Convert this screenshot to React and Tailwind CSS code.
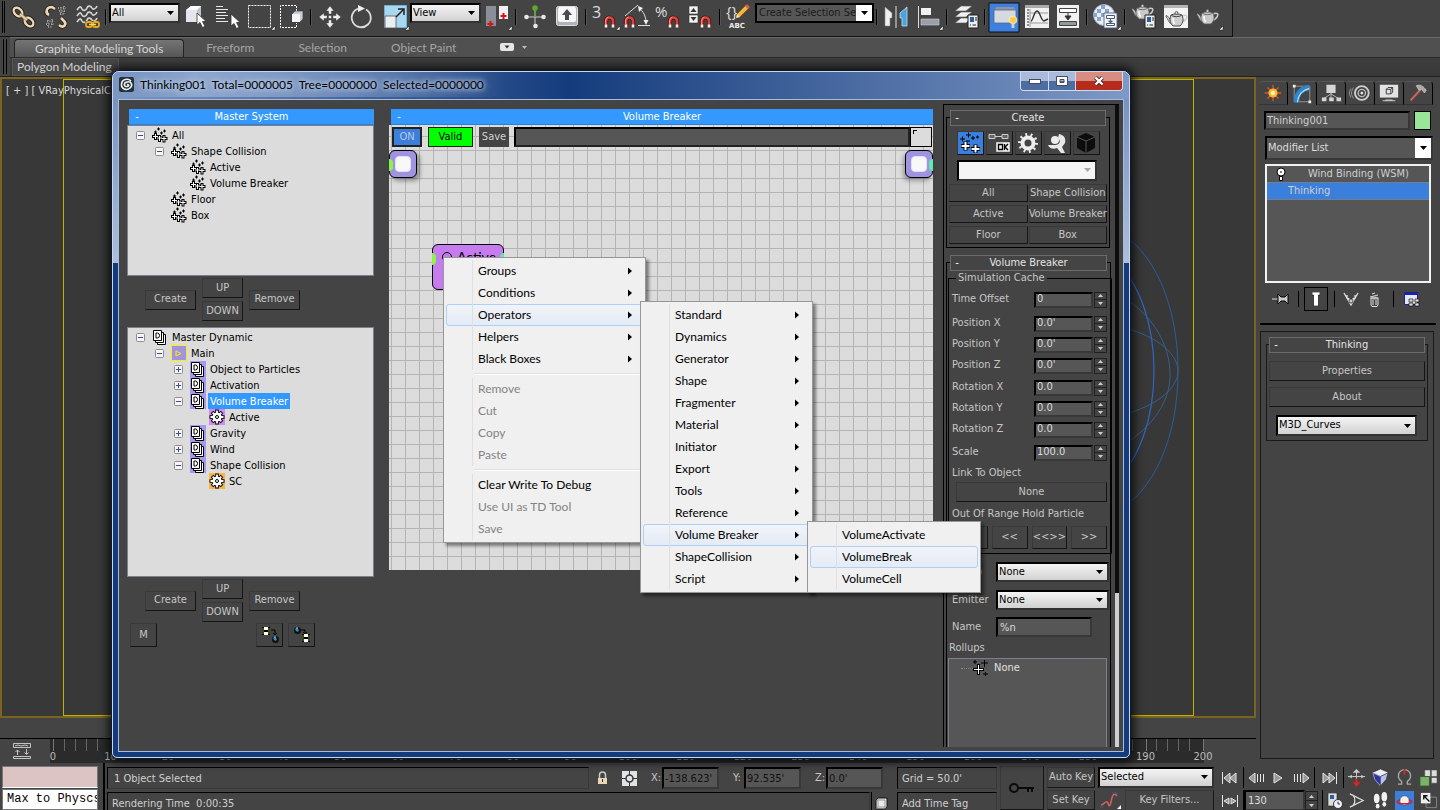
import { useState } from 'react'

const UI = "font-['DejaVu_Sans_Condensed','Open_Sans',sans-serif]"
const SHELL = 'font-[Lato,sans-serif]'

/* ---------- shared controls ---------- */

function Btn({ className = '', tint = 'bg-[#444]', children, ...rest }) {
  return (
    <button
      className={`flex items-center justify-center whitespace-nowrap border border-t-[#393939] border-l-[#393939] border-r-[#151515] border-b-[#151515] text-[#c6c6c6] ${tint} ${className}`}
      {...rest}
    >
      {children}
    </button>
  )
}

function Arrow({ className = '' }) {
  return (
    <svg className={className} width="7" height="4" viewBox="0 0 7 4">
      <path d="M0 0h7L3.5 4z" fill="currentColor" />
    </svg>
  )
}

function Dropdown({ label, options, className = '' }) {
  return (
    <div className={`relative border-2 border-t-black border-l-black border-r-[#333] border-b-[#333] bg-linear-to-b from-[#f4f4f4] to-[#d2d2d2] ${className}`}>
      <select aria-label={label} className="block h-full w-full appearance-none bg-transparent pl-px pr-4 text-black outline-none">
        {options.map((o) => <option key={o}>{o}</option>)}
      </select>
      <Arrow className="pointer-events-none absolute right-1 top-1/2 -mt-0.5 text-black" />
    </div>
  )
}

function Spinner() {
  return (
    <div className="flex w-[13px] flex-col border border-[#202020] text-[#d0d0d0]">
      <button aria-label="Increase" className="flex flex-1 items-center justify-center border-b border-[#202020]">
        <svg width="5" height="3" viewBox="0 0 5 3"><path d="M0 3h5L2.500 0z" fill="currentColor" /></svg>
      </button>
      <button aria-label="Decrease" className="flex flex-1 items-center justify-center">
        <svg width="5" height="3" viewBox="0 0 5 3"><path d="M0 0h5L2.500 3z" fill="currentColor" /></svg>
      </button>
    </div>
  )
}

const SUNK = 'border-2 border-t-black border-l-black border-r-[#383838] border-b-[#383838] bg-[#565656] outline-none'

function RollupHeader({ title, className = '' }) {
  return (
    <button className={`relative -mt-2 flex h-4 items-center border border-[#6b6b6b] bg-[#444] text-[#e4e4e4] ${className}`}>
      <span className="w-3 text-center text-white">-</span>
      <span className="flex-1 pr-3 text-center">{title}</span>
    </button>
  )
}

/* ---------- toolbar icons, 32x32 cells ---------- */

const Flyout = () => <path d="M31 25v4h-4z" fill="#fff" stroke="#111" strokeWidth=".5" />

const Cursor = ({ x, y }) => (
  <path transform={`translate(${x} ${y})`} d="M0 0v12l3-2.500 2.500 5 2.500-1.200-2.500-4.800h3.700z" fill="#fff" stroke="#333" strokeWidth=".8" />
)

const Magnet = ({ x, y }) => (
  <g transform={`translate(${x} ${y})`} fill="none">
    <path d="M2 12V6a3.500 3.500 0 0 1 7 0v6" stroke="#4a1212" strokeWidth="4.200" />
    <path d="M2 12V6a3.500 3.500 0 0 1 7 0v6" stroke="#d8443c" strokeWidth="2.600" />
    <path d="M1.500 9V6a4 4 0 0 1 3-4" stroke="#f4a09a" strokeWidth=".8" />
    <path d="M2 9.500v3M9 9.500v3" stroke="#f2f2f2" strokeWidth="2.600" />
  </g>
)

const Teapot = ({ x = 0, y = 0, fill = '#c9c9c9', stroke = '#555' }) => (
  <g transform={`translate(${x} ${y})`}>
    <path d="M16 5c4-2 6 0 4 3s-3 3-5 3" fill="none" stroke={fill} strokeWidth="1.500" />
    <path d="M5 9C3 8 3 5 0 4.500l0 1.500c2 1 2 6 6 7z" fill={fill} stroke={stroke} strokeWidth=".6" />
    <path d="M5 4c-2 5-1 8 2 11h7c3-3 4-6 2-11-3-1.500-8-1.500-11 0z" fill={fill} stroke={stroke} strokeWidth=".8" />
    <path d="M5.500 4.500c3 1.500 7 1.500 10 0" fill="none" stroke={stroke} strokeWidth=".8" />
    <circle cx="10.500" cy="2" r="1.500" fill={fill} stroke={stroke} strokeWidth=".6" />
    <path d="M7 7c0 3 0 4 1.500 6" stroke="#fff" strokeWidth="1.500" fill="none" />
  </g>
)

const MiniPanel = ({ x, y }) => (
  <g transform={`translate(${x} ${y})`}>
    <path d="M0 0h10v13H0z" fill="#eee" stroke="#222" />
    <path d="M2 2h4v5H2z" fill="#2c5f9e" />
    <path d="M8 2v4M2 10h1m1.500 0H8" stroke="#222" />
  </g>
)

const ICONS = {
  link: (
    <g fill="none">
      <g stroke="#2b2418" strokeWidth="4.500">
        <ellipse cx="11" cy="11" rx="5" ry="3.500" transform="rotate(45 11 11)" />
        <ellipse cx="22" cy="21" rx="5" ry="3.500" transform="rotate(45 22 21)" />
      </g>
      <g stroke="#ead9b8" strokeWidth="2.400">
        <ellipse cx="11" cy="11" rx="5" ry="3.500" transform="rotate(45 11 11)" />
        <ellipse cx="22" cy="21" rx="5" ry="3.500" transform="rotate(45 22 21)" />
        <path d="M13 13l7 6" stroke="#b89f70" strokeWidth="3" />
        <path d="M13 13l7 6" strokeWidth="1.400" />
      </g>
    </g>
  ),
  unlink: (
    <g fill="none">
      <path d="M10 14c-4-2-3-8 3-8l3 2M20 24c5 4 8-1 5-4l-3-3" stroke="#2b2418" strokeWidth="4.500" />
      <path d="M10 14c-4-2-3-8 3-8l3 2M20 24c5 4 8-1 5-4l-3-3" stroke="#ead9b8" strokeWidth="2.600" />
      <path d="M19 7h8M20 10h7M21 13h5M22 6v8M25 5v8M8 20h7M7 23h8M9 26h5M9 19v7M13 18v7" stroke="#b0b0b0" strokeDasharray="1 1.500" strokeWidth="1.400" />
    </g>
  ),
  bind: (
    <g fill="none">
      {[7, 13, 19].map((y) => (
        <path key={y} d={`M6 ${y + 2}c3-5 4-3 5-1s4 2 5-1 4-2 5 0 4 1 5-2`} stroke="#d5d5d5" strokeWidth="1.600" />
      ))}
      <path d="M14 20h14v8H14z" fill="#444" />
      <rect x="15" y="21" width="6" height="5" rx="2" stroke="#e8a914" strokeWidth="1.800" />
      <rect x="22" y="21" width="6" height="5" rx="2" stroke="#e8a914" strokeWidth="1.800" />
      <path d="M18 23.500h7" stroke="#ffd75e" strokeWidth="1.500" />
    </g>
  ),
  select: (
    <g>
      <path d="M6 9l5-4h10v12l-4 4H6z" fill="#bfc3cb" />
      <path d="M6 9h11v12H6z" fill="#e3e6ea" />
      <path d="M6 9l5-4h10l-4 4z" fill="#fff" />
      <Cursor x={17} y={12} />
    </g>
  ),
  byName: (
    <g>
      <path d="M4 5.500h7M4 8.500h12M4 11.500h10M4 14.500h12M4 17.500h9M4 20.500h12" stroke="#e8e8e8" />
      <Cursor x={19} y={13} />
    </g>
  ),
  region: (
    <g>
      <rect x="4.500" y="4.500" width="22" height="22" fill="none" stroke="#fff" strokeDasharray="2 1" />
      <Flyout />
    </g>
  ),
  crossing: (
    <g>
      <path d="M20.500 10V4.500h-16v22h16V22" fill="none" stroke="#fff" strokeDasharray="2 1" />
      <path d="M16 13l3-3h8v8l-3 3h-8z" fill="#c7cbd2" stroke="#333" strokeWidth=".6" />
      <path d="M16 13h8v8h-8z" fill="#f3f4f6" />
    </g>
  ),
  move: (
    <path d="M16 5l4 5h-2.500v3h-3v-3H12zM16 27l4-5h-2.500v-3h-3v3H12zM5 16l5-4v2.500h3v3h-3V20zM27 16l-5-4v2.500h-3v3h3V20zM14.500 14.500h3v3h-3z" fill="#eee" stroke="#333" strokeWidth=".4" />
  ),
  rotate: (
    <g fill="none">
      <path d="M13 7.500A9.500 9.500 0 1 0 20 8.500" stroke="#ddd" strokeWidth="1.800" />
      <path d="M12 4l7 3.500-7 3.500z" fill="#eee" />
    </g>
  ),
  scale: (
    <g>
      <path d="M6.500 4.500h22v22h-22z" fill="#a9d7ee" stroke="#69b5dc" />
      <path d="M7 15h11v12H7z" fill="#eceef2" stroke="#555" strokeWidth=".8" />
      <path d="M18 16l7-7M20 8h6v6" stroke="#222" strokeWidth="1.500" fill="none" />
      <Flyout />
    </g>
  ),
  pivot: (
    <g>
      <path d="M5 5h10v20H5z" fill="#8a8e98" />
      <path d="M18 5h9v13h-9z" fill="#f0f0f2" />
      <path d="M9.500 20v6M6.500 23h6M22.500 12v6M19.500 15h6" stroke="#e01010" strokeWidth="2" />
      <Flyout />
    </g>
  ),
  manipulate: (
    <g>
      <path d="M16 7v18M8 16h17" stroke="#ccc" />
      <path d="M16 8v8" stroke="#6c9b3a" strokeWidth="1.500" />
      <circle cx="16" cy="7" r="2.800" fill="#5fa829" />
      <circle cx="7.500" cy="16" r="2.300" fill="#e8e8e8" />
      <circle cx="24.500" cy="16" r="2.300" fill="#e8e8e8" />
      <circle cx="16.500" cy="25" r="2.300" fill="#e8e8e8" />
    </g>
  ),
  keyboard: (
    <g>
      <rect x="5.500" y="5.500" width="21" height="19" rx="2" fill="#aeb2ba" stroke="#ddd" />
      <rect x="7" y="6" width="18" height="15" rx="2" fill="#f7f7f8" />
      <path d="M16 8l5 6h-3v5h-4v-5h-3z" fill="#4a4a52" />
    </g>
  ),
  snap: (
    <g>
      <text x="3" y="17" fontSize="16" fill="#ddd" fontFamily="Open Sans">3</text>
      <Magnet x={15} y={14} />
      <Flyout />
    </g>
  ),
  angleSnap: (
    <g>
      <path d="M4 15L17 4M17 24.500h12M19 8c5 4 6 10 6 14" stroke="#ddd" fill="none" />
      <path d="M17 5l5 2-4 4zM22.500 19h5l-2.500 5z" fill="#eee" />
      <Magnet x={3} y={14} />
    </g>
  ),
  percentSnap: (
    <g>
      <text x="2" y="16" fontSize="15" fill="#ddd" fontFamily="Open Sans">%</text>
      <Magnet x={15} y={14} />
    </g>
  ),
  spinnerSnap: (
    <g>
      <path d="M4 5h9v8H4zM4 14h9v8H4z" fill="#f2f2f2" stroke="#333" strokeWidth=".6" />
      <path d="M5.500 11h6l-3-4zM5.500 16h6l-3 4z" fill="#333" />
      <Magnet x={15} y={14} />
    </g>
  ),
  sets: (
    <g>
      <text x="3" y="16" fontSize="15" fill="#ddd" fontFamily="Open Sans">{'{}'}</text>
      <text x="6" y="27" fontSize="7" fontWeight="700" fill="#eee" fontFamily="DejaVu Sans">ABC</text>
      <path d="M13 17l1-4 9-9 3 3-9 9z" fill="#f3b53a" stroke="#6b4a10" strokeWidth=".6" />
      <path d="M22 5l2-2 3 3-2 2z" fill="#d55" />
      <path d="M13 17l1-4 3 3z" fill="#f6e2c0" />
    </g>
  ),
  mirror: (
    <g>
      <path d="M5 6l7 6v5l-2 0 0 8H5z" fill="#eef0f3" stroke="#888" strokeWidth=".6" />
      <path d="M27 6l-7 6v5l2 0 0 8h5z" fill="#4da3dc" stroke="#bfe0f4" strokeWidth=".8" />
      <path d="M16 5v22" stroke="#ccc" strokeWidth="1.200" />
    </g>
  ),
  align: (
    <g>
      <path d="M6.500 5v22" stroke="#ddd" />
      <path d="M9 7h10v7H9z" fill="#eef0f3" />
      <path d="M9 18h18v6H9z" fill="#9aa0aa" stroke="#c9ccd2" strokeWidth=".6" />
      <Flyout />
    </g>
  ),
  layers: (
    <g>
      {[17, 11, 5].map((y) => (
        <path key={y} d={`M5 ${y + 5}l6-5h11l-6 5z`} fill="#f0f0f0" stroke="#555" strokeWidth=".6" />
      ))}
      <MiniPanel x={18} y={14} />
    </g>
  ),
  ribbon: (
    <g>
      <path d="M1 2h30v29H1z" fill="#3d80df" stroke="#111" />
      <path d="M6 10l2-4h18l2 4z" fill="#8c96a8" />
      <path d="M6 9h22v13H6z" fill="#d5d9e0" stroke="#5d6675" strokeWidth=".8" />
      <circle cx="25" cy="19" r="3.800" fill="#ffc94a" stroke="#fff2c0" strokeWidth=".8" />
      <path d="M23.500 23h3v4h-3z" fill="#cfcfcf" />
    </g>
  ),
  curves: (
    <g>
      <path d="M5 4h24v23H5z" fill="#f1f1f1" />
      <path d="M5 4h24v3H5z" fill="#aaa" />
      <path d="M10 8v18M10 12h18M10 22h18" stroke="#999" />
      <path d="M7 9h2M7 12h2M7 15h2M7 18h2M7 21h2M7 24h2" stroke="#333" />
      <path d="M11 20c2 0 3-10 6-10s4 10 7 10l4-2" fill="none" stroke="#333" strokeWidth="1.400" />
    </g>
  ),
  schematic: (
    <g>
      <path d="M5 4h22v23H5z" fill="#f1f1f1" />
      <path d="M7.500 7.500h17v4h-17z" fill="#fff" stroke="#444" />
      <path d="M7.500 20.500h17v4h-17z" fill="#8f9a9a" stroke="#444" />
      <path d="M16 12v5M13 15h6l-3 4z" stroke="#333" fill="#333" />
    </g>
  ),
  material: (
    <g>
      <circle cx="14" cy="14" r="10.500" fill="#e9eef5" stroke="#9fb0c6" />
      <path d="M7 8h4v4H7zM15 8h4v4h-4zM11 12h4v4h-4zM4 12h3v4H4zM7 16h4v4H7zM11 4h4v4h-4zM19 12h4v4h-4z" fill="#86a6cf" />
      <path d="M14 12h13v15H14z" fill="#f1f3f6" stroke="#46597c" strokeWidth=".8" />
      <path d="M16.500 14.500h8v3h-8zM16.500 22.500h8v2h-8z" fill="#fff" stroke="#46597c" />
      <path d="M20.500 18v2M18.500 20h4l-2 2z" stroke="#46597c" fill="#46597c" strokeWidth=".8" />
      <Flyout />
    </g>
  ),
  renderSetup: (
    <g>
      <Teapot x={4} y={3} />
      <MiniPanel x={17} y={14} />
    </g>
  ),
  frame: (
    <g>
      <path d="M4 4h24v23H4z" fill="#f4f4f4" />
      <path d="M4 4h24v3H4z" fill="#b5b5b5" />
      <Teapot x={6} y={10} fill="#cfcfcf" stroke="#222" />
    </g>
  ),
  render: (
    <g>
      <Teapot x={5} y={8} />
      <Flyout />
    </g>
  ),
}

function Tool({ name, label }) {
  return (
    <button aria-label={label} className="size-8 shrink-0">
      <svg width="32" height="32" viewBox="0 0 32 32">{ICONS[name]}</svg>
    </button>
  )
}

const Sep = () => <span className="mx-0.5 h-4 w-0.5 shrink-0 border-l border-black bg-[#555]" />

function MainToolbar() {
  return (
    <div className="flex h-[37px]">
      <div className={`flex items-center border-b border-r border-[#111] pb-0.5 pr-2 ${UI} text-[11px]`}>
        <span className="mx-0.5 h-8 w-[3px] shrink-0 border-x border-black" />
        <Tool name="link" label="Select and link" />
        <Tool name="unlink" label="Unlink selection" />
        <Tool name="bind" label="Bind to space warp" />
        <Sep />
        <Dropdown label="Selection filter" options={['All']} className="mb-2 h-[20px] w-[71px]" />
        <Tool name="select" label="Select object" />
        <Tool name="byName" label="Select by name" />
        <Tool name="region" label="Selection region" />
        <Tool name="crossing" label="Window crossing" />
        <Sep />
        <Tool name="move" label="Move" />
        <Tool name="rotate" label="Rotate" />
        <Tool name="scale" label="Scale" />
        <Dropdown label="Reference coordinate system" options={['View']} className="mb-2 h-[20px] w-[71px]" />
        <Tool name="pivot" label="Use pivot point center" />
        <Sep />
        <Tool name="manipulate" label="Manipulate" />
        <Tool name="keyboard" label="Keyboard shortcut override" />
        <Sep />
        <Tool name="snap" label="Snaps toggle" />
        <Tool name="angleSnap" label="Angle snap" />
        <Tool name="percentSnap" label="Percent snap" />
        <Tool name="spinnerSnap" label="Spinner snap" />
        <Sep />
        <Tool name="sets" label="Edit named selection sets" />
        <div className="mb-2 flex h-5 w-[119px] border-2 border-black bg-[#565656]">
          <input aria-label="Named selection sets" defaultValue="Create Selection Se" className="min-w-0 flex-1 bg-transparent pl-0.5 text-[#1c1c1c] outline-none" />
          <button aria-label="Show sets" className="flex w-4 items-center justify-center bg-white"><Arrow className="text-black" /></button>
        </div>
        <Sep />
        <Tool name="mirror" label="Mirror" />
        <Tool name="align" label="Align" />
        <Sep />
        <Tool name="layers" label="Layer manager" />
        <Sep />
        <Tool name="ribbon" label="Graphite modeling tools" />
        <Tool name="curves" label="Curve editor" />
        <Tool name="schematic" label="Schematic view" />
        <Sep />
        <Tool name="material" label="Material editor" />
        <Sep />
        <Tool name="renderSetup" label="Render setup" />
        <Tool name="frame" label="Rendered frame window" />
        <Tool name="render" label="Render production" />
      </div>
    </div>
  )
}

function Ribbon() {
  return (
    <div className={`flex h-10 border-b border-[#222] text-xs ${SHELL}`}>
      <span className="mx-[3px] my-0.5 w-[4px] border-x border-black" />
      <div className="flex min-w-0 flex-1 flex-col">
        <div className="flex h-[21px] items-end border-b border-[#2b2b2b] border-t border-t-[#6a6a6a] bg-[#505050] pl-1 text-[#a5a5a5]">
          <button className="h-[18px] rounded-t-sm border border-b-0 border-[#222] bg-linear-to-b from-[#757575] to-[#565656] px-5 leading-4 text-[#d6d6d6]">
            Graphite Modeling Tools
          </button>
          <button className="h-[18px] px-[22px] leading-4">Freeform</button>
          <button className="h-[18px] px-[22px] leading-4">Selection</button>
          <button className="h-[18px] px-[22px] leading-4">Object Paint</button>
          <button aria-label="Ribbon options" className="mb-1.5 ml-[22px] flex items-center gap-2 text-[#bbb]">
            <svg width="14" height="8" viewBox="0 0 14 8"><rect width="14" height="8" rx="2" fill="#e6e6e6" /><path d="M4.500 2.500h5L7 5.500z" fill="#333" /></svg>
            <svg width="5" height="3" viewBox="0 0 5 3"><path d="M0 0h5L2.500 3z" fill="currentColor" /></svg>
          </button>
        </div>
        <div className="flex-1 bg-linear-to-b from-[#3e3e3e] to-[#383838]">
          <button className="ml-0.5 h-[18px] w-[107px] whitespace-nowrap border border-[#555] bg-[#474747] pl-1 text-left leading-4 text-[#d2d2d2]">Polygon Modeling</button>
        </div>
      </div>
    </div>
  )
}

/* ---------- viewport and time slider ---------- */

function Viewport() {
  return (
    <main className={`relative min-h-0 flex-1 border-2 border-[#7b6420] bg-[#383838] text-[11px] text-[#d8d8d8] ${UI}`}>
      <div className="h-full pl-[61px] pr-[60px]">
        <div className="h-full border border-[#b9b400]" />
      </div>
      <p className="absolute left-1 top-1 whitespace-nowrap">[ + ] [ VRayPhysicalCam001 ]</p>
      <svg className="absolute right-[60px] top-[130px]" width="140" height="320" viewBox="0 0 140 320" fill="none" stroke="#2c5c9c">
        <path d="M60 20c40 20 64 76 64 142s-24 122-64 142" />
        <path d="M60 50c26 24 40 66 40 112s-14 88-40 112" stroke="#2f66c8" strokeWidth="1.200" />
        <path d="M66 86c24 14 48 40 50 76s-26 62-50 76M66 118c30 6 58 24 58 44s-28 38-58 44" stroke="#33608f" />
      </svg>
    </main>
  )
}

function TimeSlider() {
  const marks = Array.from({ length: 21 }, (_, i) => i * 10)
  return (
    <div className={`flex h-[25px] border-t border-black text-[11px] text-[#bcbcbc] ${UI}`}>
      <button aria-label="Mini curve editor" className="flex w-[50px] shrink-0 items-center justify-center pr-[7px] pl-px">
        <svg width="18" height="17" viewBox="0 0 18 17" fill="none" stroke="#c4c4c4">
          <path d="M.5.500h17v4H.5zM.5 13.500h17v2H.5zM2 3l3-1 3 1 4-1 3 1M4.500 12V7M2.500 9l2-2 2 2M13.500 6v5M11.500 9.500l2 2 2-2" />
        </svg>
      </button>
      <div className="mr-[52px] flex flex-1 bg-[#2b2b2b]">
        {marks.map((m) => (
          <div key={m} className={m === 200 ? 'w-1' : 'flex-1 basis-0'}>
            <div className="ml-[3px] flex h-3 border-l border-[#777]">
              {m < 200 && [0, 1, 2, 3, 4].map((t) => <span key={t} className={t === 4 ? 'flex-1' : 'flex-1 border-r border-[#666]'} />)}
            </div>
            <span className="-ml-3 block w-[30px] text-center leading-3">{m}</span>
          </div>
        ))}
      </div>
    </div>
  )
}

/* ---------- command panel ---------- */

const TABS = [
  ['Create', <g key="c"><path d="M12 3v18M3 12h18M6 6l12 12M18 6L6 18" stroke="#d9562a" strokeWidth="1.400" /><circle cx="12" cy="12" r="5" fill="#ffb52e" /><circle cx="12" cy="12" r="2.500" fill="#fff3b0" /></g>],
  ['Modify', <g key="m"><path d="M3.500 3.500h17v17h-17z" fill="none" stroke="#999" /><path d="M6 21C6 12 11 6 20 5" fill="none" stroke="#2d85cc" strokeWidth="6" /><path d="M7 21C8 12 12 8 20 6" fill="none" stroke="#a8dcfa" strokeWidth="1.500" /><path d="M2 2h3v3H2zM19 19h3v3h-3z" fill="#eee" /></g>],
  ['Hierarchy', <g key="h"><path d="M7 3h10v9H7z" fill="#d3d5d8" /><path d="M12 12v6M12 13l-8 5M12 13l8 5" stroke="#bbb" /><path d="M2 17h5v4H2zM10 17h5v4h-5zM18 17h5v4h-5z" fill="#d3d5d8" /></g>],
  ['Motion', <g key="o" fill="none"><path d="M5 6c-3 4-3 8 0 12M2 7c-2 4-2 6 0 10" stroke="#999" /><circle cx="14" cy="12" r="7.500" stroke="#d0d0d0" strokeWidth="2" /><circle cx="14" cy="12" r="4" stroke="#bbb" strokeWidth="1.500" /><circle cx="14" cy="12" r="1.500" fill="#eee" /></g>],
  ['Display', <g key="d"><path d="M2 3h20v14H2z" fill="#e2e2e4" /><path d="M9 8l2-2h5v5l-2 2H9zM9 8h5v5M14 8l2-2" fill="none" stroke="#333" /><path d="M8 19h8v1H8zM5 20h14v1H5z" fill="#c5c5c5" /></g>],
  ['Utilities', <g key="u"><path d="M4 20L15 8" stroke="#a05048" strokeWidth="3" /><path d="M4 20L15 8" stroke="#d98a80" /><path d="M10 4c5-2 8 1 11 5l-2 3-3-4-3 1z" fill="#a9a9a9" stroke="#ddd" strokeWidth=".6" /></g>],
]

function CommandPanel() {
  return (
    <aside className={`flex w-[184px] shrink-0 flex-col pb-1 text-[11px] text-[#cfcfcf] ${UI}`}>
      <div className="mt-1 flex pl-[3px]">
        {TABS.map(([name, icon], i) => (
          <button key={name} aria-label={name} className={`flex h-6 w-[29px] items-center justify-center rounded-t border-r border-t border-t-[#555] border-r-black ${i === 1 ? '' : 'border-b border-b-[#333]'}`}>
            <svg width="22" height="22" viewBox="0 0 24 24">{icon}</svg>
          </button>
        ))}
      </div>
      <div className="mt-1.5 flex gap-1 pl-2 pr-[9px]">
        <input aria-label="Object name" defaultValue="Thinking001" className={`h-[19px] min-w-0 flex-1 pl-px ${SUNK}`} />
        <button aria-label="Object color" className="w-[17px] border border-black bg-[#99e699]" />
      </div>
      <div className="relative ml-[9px] mr-[7px] mt-1.5 h-6">
        <select aria-label="Modifier list" className={`h-full w-full appearance-none pl-px text-[#dcdcdc] ${SUNK}`}><option>Modifier List</option></select>
        <span className="pointer-events-none absolute inset-y-0.5 right-0.5 flex w-4 items-center justify-center bg-white text-black"><Arrow /></span>
      </div>
      <ul className="ml-[9px] mr-[9px] mt-1 h-[119px] border-2 border-[#f2f2f2] bg-[#565656] leading-4">
        <li className="flex">
          <svg className="ml-2" width="12" height="16" viewBox="0 0 12 16"><circle cx="6" cy="6" r="4" fill="#fff" stroke="#000" /><path d="M4.500 10.500h3v4h-3z" fill="#fff" stroke="#000" /><path d="M6 5v2" stroke="#000" /></svg>
          <span className="ml-[21px]">Wind Binding (WSM)</span>
        </li>
        <li className="border-y border-[#6f7f95] bg-[#3b7fdd] pl-[21px] leading-4">Thinking</li>
      </ul>
      <div className="mt-1 flex h-6 items-center pl-4">
        <button aria-label="Pin stack">
          <svg width="18" height="12" viewBox="0 0 18 12"><path d="M0 6h6" stroke="#ddd" /><path d="M6 1v10l3-3h4l3 3V1l-3 3H9z" fill="#ccc" stroke="#000" /></svg>
        </button>
        <span className="ml-2 h-4 w-px bg-black" />
        <button aria-label="Show end result" className="ml-[5px] flex h-6 w-6 items-center justify-center border border-black">
          <svg width="8" height="14" viewBox="0 0 8 14"><path d="M0 0h8v3H6.500v11h-5V3H0z" fill="#fff" stroke="#000" strokeWidth=".6" /></svg>
        </button>
        <span className="ml-1.5 h-4 w-px bg-black" />
        <button aria-label="Make unique" className="ml-2">
          <svg width="16" height="15" viewBox="0 0 16 15"><path d="M1 1l7 12 7-12M5 6l3 3 3-3M4 3v4M12 3v4" fill="none" stroke="#e2e2e2" strokeWidth="1.300" /><circle cx="8" cy="9" r="2" fill="#ccc" stroke="#111" strokeWidth=".6" /></svg>
        </button>
        <button aria-label="Remove modifier" className="ml-[9px]">
          <svg width="13" height="15" viewBox="0 0 13 15"><path d="M3 6h7v7l-1 1.500H4L3 13zM5 8v5M8 8v5M2 5l8-2M4 2l3-1" fill="none" stroke="#ddd" /><ellipse cx="6.500" cy="6" rx="4" ry="1.500" fill="#bbb" /></svg>
        </button>
        <span className="ml-3 h-4 w-px bg-black" />
        <button aria-label="Configure modifier sets" className="ml-2.5">
          <svg width="16" height="15" viewBox="0 0 16 15"><path d="M.5.500h13v12H.5z" fill="#e6e9f5" stroke="#1a22a8" /><path d="M0 0h14v3H0z" fill="#1a22a8" /><path d="M5 7h4v3H5zM11 7h4v3h-4zM5 11h4v3H5zM11 11h4v3h-4z" fill="#ddd" stroke="#111" strokeWidth=".7" /></svg>
        </button>
      </div>
      <div className="mx-1 mt-3 h-0.5 bg-black" />
      <section className="ml-1 mr-1.5 mt-1.5 flex-1 border border-[#191919] px-[5px] pt-3">
        <div className="flex flex-col border border-[#191919] px-0.5 pb-1">
          <RollupHeader title="Thinking" />
          <Btn className="mt-2 h-5">Properties</Btn>
          <Btn className="mt-1.5 h-5">About</Btn>
          <Dropdown label="Thinking tool" options={['M3D_Curves']} className="ml-[7px] mr-2 mt-2 h-[21px]" />
        </div>
      </section>
    </aside>
  )
}

/* ---------- Thinking Particles window ---------- */

function ParticleIcon() {
  return (
    <svg width="16" height="16" viewBox="0 0 16 16" fill="none">
      <path d="M2 5h3M3.500 3.500v3M5 2h3M6.500.500v3M11 4h3M12.500 2.500v3M8 6h3M9.500 4.500v3" stroke="#000" />
      <path d="M0 9.500h7M3.500 6v7M4 11h7M7.500 8v7M8.500 11.500h7M12 8v7.500" stroke="#000" strokeWidth="3" />
      <path d="M1 9.500h5M3.500 7v5M5 11h5M7.500 9v5M9.500 11.500h5M12 9v5.500" stroke="#fff" strokeWidth="1" />
    </svg>
  )
}

function GroupIcon({ tint = '' }) {
  return (
    <span className={`flex size-4 items-center justify-center ${tint}`}>
      <svg width="14" height="15" viewBox="0 0 14 15">
        <path d="M4.500 4.500h8v10h-8z" fill="#fff" stroke="#000" />
        <path d="M2.500 2.500h8v10h-8z" fill="#fff" stroke="#000" />
        <path d="M.5.500h8v10h-8z" fill="#fff" stroke="#000" />
        <path d="M3 3h1.500q2 0 2 2.500T4.500 8H3z" fill="none" stroke="#000" />
      </svg>
    </span>
  )
}

function GearIcon({ tint }) {
  return (
    <span className={`flex size-4 items-center justify-center ${tint}`}>
      <svg width="16" height="16" viewBox="0 0 16 16" fill="none">
        <path d="M8 .5v15M.5 8h15M3 3l10 10M13 3L3 13" stroke="#000" strokeWidth="3.600" />
        <circle cx="8" cy="8" r="5.500" fill="#000" />
        <path d="M8 1.500v13M1.500 8h13M3.600 3.600l8.800 8.800M12.400 3.600l-8.800 8.800" stroke="#fff" strokeWidth="1.800" />
        <circle cx="8" cy="8" r="4.600" fill="#fff" />
        <circle cx="8" cy="8" r="1.500" stroke="#000" />
      </svg>
    </span>
  )
}

const NODE_ICONS = {
  particle: <ParticleIcon />,
  group: <GroupIcon />,
  violetGroup: <GroupIcon tint="bg-[#a69af0]" />,
  violetGear: <GearIcon tint="bg-[#cf8bf2]" />,
  orangeGear: <GearIcon tint="bg-[#f5b443]" />,
  main: (
    <span className="flex size-4 items-center justify-center border border-[#ffee00] bg-[#a093e0]">
      <svg width="8" height="7" viewBox="0 0 8 7"><path d="M1 1v5l5-2.500z" fill="none" stroke="#ffee00" /></svg>
    </span>
  ),
}

const SYSTEM_TREE = [
  [0, '-', 'particle', 'All'],
  [1, '-', 'particle', 'Shape Collision'],
  [2, '', 'particle', 'Active'],
  [2, '', 'particle', 'Volume Breaker'],
  [1, '', 'particle', 'Floor'],
  [1, '', 'particle', 'Box'],
]

const DYNAMIC_TREE = [
  [0, '-', 'group', 'Master Dynamic'],
  [1, '-', 'main', 'Main'],
  [2, '+', 'violetGroup', 'Object to Particles'],
  [2, '+', 'violetGroup', 'Activation'],
  [2, '-', 'violetGroup', 'Volume Breaker', true],
  [3, '', 'violetGear', 'Active'],
  [2, '+', 'violetGroup', 'Gravity'],
  [2, '+', 'violetGroup', 'Wind'],
  [2, '-', 'violetGroup', 'Shape Collision'],
  [3, '', 'orangeGear', 'SC'],
]

const INDENT = ['pl-2', 'pl-[27px]', 'pl-[46px]', 'pl-[65px]']

function Tree({ rows, className = '' }) {
  return (
    <ul className={`border border-[#7c808c] bg-[#dcdcdc] text-black ${className}`}>
      {rows.map(([depth, toggle, icon, name, selected], i) => (
        <li key={i} className={`flex h-4 items-center ${INDENT[depth]}`}>
          <span className="flex w-[9px] shrink-0">
            {toggle && (
              <svg width="9" height="9" viewBox="0 0 9 9">
                <rect x=".5" y=".5" width="8" height="8" rx="1" fill="#f6f6f6" stroke="#8d8d8d" />
                <path d={toggle === '+' ? 'M2 4.500h5M4.500 2v5' : 'M2 4.500h5'} stroke="#3a4f9a" />
              </svg>
            )}
          </span>
          <span className="ml-[7px] mr-0.5 shrink-0">{NODE_ICONS[icon]}</span>
          <span className={`h-4 whitespace-nowrap px-0.5 leading-[17px] ${selected ? 'bg-[#3399ff] text-white' : ''}`}>{name}</span>
        </li>
      ))}
    </ul>
  )
}

function TreeButtons() {
  return (
    <div className="flex items-center gap-1.5 pl-[18px]">
      <Btn className="h-5 w-[51px]">Create</Btn>
      <div className="flex flex-col gap-[3px]">
        <Btn className="h-5 w-[41px]">UP</Btn>
        <Btn className="h-5 w-[41px]">DOWN</Btn>
      </div>
      <Btn className="h-5 w-[51px]">Remove</Btn>
    </div>
  )
}

function BlueHeader({ title }) {
  return (
    <div className="ml-0.5 flex h-4 items-center border-b border-[#2a7fd6] bg-[#3399ff] leading-[17px] text-white">
      <button aria-label={`Collapse ${title}`} className="w-4 text-center">-</button>
      <span className="flex-1 pr-4 text-center">{title}</span>
    </div>
  )
}

const Floppy = () => (
  <g><path d="M0 0h8v8H0z" fill="#000" /><path d="M2 0h4v3H2zM2 5h4v3H2z" fill="#fff" /><path d="M1 1v6M7 1v6" stroke="#8a8a20" /></g>
)

const Globe = () => (
  <g><circle cx="3.500" cy="3.500" r="3.500" fill="#111" /><path d="M1 2l2-1 2 2-1 2-2-1z" fill="#2e8fc0" /><path d="M2 1h2" stroke="#9ee" /></g>
)

function SystemColumn() {
  return (
    <div className="flex w-[247px] shrink-0 flex-col">
      <BlueHeader title="Master System" />
      <Tree rows={SYSTEM_TREE} className="mb-0.5 h-[151px] pt-px" />
      <TreeButtons />
      <Tree rows={DYNAMIC_TREE} className="mt-1.5 h-[250px] pt-px" />
      <div className="pt-0.5"><TreeButtons /></div>
      <div className="mt-px flex pl-[3px]">
        <Btn className="h-6 w-[27px]">M</Btn>
        <Btn aria-label="Export" className="ml-[99px] h-6 w-[27px]">
          <svg width="18" height="18" viewBox="0 0 18 18"><g transform="translate(1 1)"><Floppy /></g><g transform="translate(11 10)"><Globe /></g><path d="M10 4h4v5M12 7l2 2 2-2" fill="none" stroke="#000" /></svg>
        </Btn>
        <Btn aria-label="Import" className="ml-[5px] h-6 w-[27px]">
          <svg width="18" height="18" viewBox="0 0 18 18"><g transform="translate(1 1)"><Globe /></g><g transform="translate(9 8)"><Floppy /></g><path d="M8 4h4v4M10 6l2 2 2-2" fill="none" stroke="#000" /></svg>
        </Btn>
      </div>
    </div>
  )
}

/* context menu */

const BREAKER_MENU = [{ name: 'VolumeActivate' }, { name: 'VolumeBreak', hot: true }, { name: 'VolumeCell' }]

const OPERATOR_MENU = [
  'Standard', 'Dynamics', 'Generator', 'Shape', 'Fragmenter', 'Material', 'Initiator',
  'Export', 'Tools', 'Reference', 'Volume Breaker', 'ShapeCollision', 'Script',
].map((name) => (name === 'Volume Breaker' ? { name, more: true, hot: true, items: BREAKER_MENU, width: 'w-[174px]' } : { name, more: true }))

const NODE_MENU = [
  { name: 'Groups', more: true },
  { name: 'Conditions', more: true },
  { name: 'Operators', more: true, hot: true, items: OPERATOR_MENU, width: 'w-[173px]' },
  { name: 'Helpers', more: true },
  { name: 'Black Boxes', more: true },
  null,
  { name: 'Remove', off: true },
  { name: 'Cut', off: true },
  { name: 'Copy', off: true },
  { name: 'Paste', off: true },
  null,
  { name: 'Clear Write To Debug' },
  { name: 'Use UI as TD Tool', off: true },
  { name: 'Save', off: true },
]

function Menu({ items, className = '' }) {
  return (
    <ul role="menu" className={`absolute z-20 border border-[#979797] bg-[#f0f0f0] p-0.5 text-xs text-black shadow-[3px_3px_3px_rgba(0,0,0,0.45)] ${SHELL} ${className}`}>
      {items.map((item, i) =>
        item ? (
          <li key={item.name} className="relative">
            <button
              role="menuitem"
              disabled={item.off}
              className={`flex h-[22px] w-full items-center whitespace-nowrap rounded-[3px] border ${item.hot ? 'border-[#aecff7] bg-linear-to-b from-[#f1f4f9] to-[#e4ebf5]' : 'border-transparent'} ${item.off ? 'text-[#838383]' : ''}`}
            >
              <span className="mr-[5px] h-[22px] w-[26px] shrink-0 border-r border-[#e0e0e0]" />
              <span className="flex-1 text-left">{item.name}</span>
              {item.more && <svg className="mr-2.5" width="4" height="8" viewBox="0 0 4 8"><path d="M0 .5v7L4 4z" fill="#000" /></svg>}
            </button>
            {item.items && <Menu items={item.items} className={`left-full -top-[3px] -ml-[3px] ${item.width}`} />}
          </li>
        ) : (
          <li key={i} role="separator" className="flex h-2 items-center"><span className="ml-7 h-0.5 flex-1 border-b border-white bg-[#e0e0e0]" /></li>
        ),
      )}
    </ul>
  )
}

function Canvas() {
  const [on, setOn] = useState(true)
  return (
    <div className="flex min-w-0 flex-1 flex-col">
      <BlueHeader title="Volume Breaker" />
      <div className="relative h-[445px] bg-[#dcdcdc] bg-[linear-gradient(to_right,#b4b4b4_1px,transparent_1px),linear-gradient(to_bottom,#b4b4b4_1px,transparent_1px)] bg-size-[14px_14px] bg-position-[2px_11px]">
        <div className="flex h-[22px] items-center pl-[3px] pr-px pt-0.5">
          <button onClick={() => setOn(!on)} className="h-5 w-[30px] border-2 border-[#222] bg-[#3b7fdd] leading-4 text-[#b9c9e2]">{on ? 'ON' : 'OFF'}</button>
          <button className="ml-1.5 h-5 w-[45px] border border-[#222] bg-[#00ff00] text-black">Valid</button>
          <button className="ml-1.5 h-5 w-[30px] bg-[#444] text-[#d2d2d2]">Save</button>
          <input aria-label="Group note" className="ml-[5px] h-5 min-w-0 flex-1 border-2 border-t-black border-l-black border-r-[#222] border-b-[#222] bg-[#565656] outline-none" />
          <button aria-label="Maximize" className="relative h-5 w-[22px] shrink-0 border border-black bg-[#dcdcdc]"><span className="absolute left-0.5 top-0.5 h-1 w-1 border-l border-t border-black" /></button>
        </div>
        <div className="absolute left-0 top-[25px] flex size-7 items-center justify-center rounded-md border border-black bg-[#a093e0] shadow-[3px_3px_4px_rgba(0,0,0,0.35)]">
          <span className="absolute -left-px top-2 h-3 w-1 rounded-r-full bg-[#8df24c]" />
          <span className="size-4 rounded border border-[#e4defa] bg-[#f8f8f8]" />
        </div>
        <div className="absolute right-0 top-[25px] flex size-7 items-center justify-center rounded-md border border-black bg-[#a093e0] shadow-[-2px_3px_4px_rgba(0,0,0,0.3)]">
          <span className="absolute -right-px top-2 h-3 w-1 rounded-l-full bg-[#5fe8b0]" />
          <span className="size-4 rounded border border-[#e4defa] bg-[#f8f8f8]" />
        </div>
        <div className={`absolute left-[43px] top-[119px] h-[46px] w-[72px] rounded-md border border-black bg-[#c67bef] text-sm text-black ${SHELL}`}>
          <span className="absolute -left-px top-2 h-3 w-1 rounded-r-full bg-[#8df24c]" />
          <span className="absolute -right-px top-2 h-3 w-1 rounded-l-full bg-[#5fe8b0]" />
          <p className="flex items-center gap-[5px] pl-[9px] pt-0.5 leading-5"><span className="size-[10px] rounded-full border border-black" />Active</p>
        </div>
        <Menu items={NODE_MENU} className="left-[54px] top-[132px] w-[203px]" />
      </div>
    </div>
  )
}

/* right rollups */

const CREATE_ICONS = [
  ['Particle groups', 'bg-[#3b7fdd]', <g key="a" fill="none"><path d="M1 7h5M3.500 4.500v5M7 3h5M9.500.500v5M12 6h4M14 4v4M17 5h3M18.500 3.500v3M7 9h4" stroke="#000" /><path d="M2 14h9M6.500 9.500v9M12 17h9M16.500 12.500V21" stroke="#000" strokeWidth="4" /><path d="M2.500 14h8M6.500 10v8M12.500 17h8M16.500 13v7.500" stroke="#fff" strokeWidth="2" /></g>],
  ['Conditions', 'bg-[#444]', <g key="b"><path d="M1 2.500h6v4H1zM14 2.500h6v4h-6zM7 4.500h7" fill="#666" stroke="#ccc" /><path d="M8.500 10.500h13v9h-13z" fill="#eee" stroke="#ccc" /><path d="M10.500 12.500h4v5h-4zM16.500 12v6M20 12l-3 3 3 3" fill="none" stroke="#000" strokeWidth="1.300" /></g>],
  ['Operators', 'bg-[#444]', <g key="c" fill="none" stroke="#eee"><circle cx="11" cy="11" r="5.500" strokeWidth="4" /><circle cx="11" cy="11" r="8.500" strokeWidth="3" strokeDasharray="1.800 3.500" /></g>],
  ['Helpers', 'bg-[#444]', <g key="d"><path d="M13 2c5 1 7 4 6 9l-3 4 3 6h-4l-4-5c-4 2-8 0-9-3l7 0c5 0 6-4 3-7z" fill="#e8e8e8" /><circle cx="9" cy="8" r="4" fill="#eee" /></g>],
  ['Black boxes', 'bg-[#444]', <g key="e"><path d="M11 1l9 4v11l-9 5-9-5V5z" fill="#0d0d0d" /><path d="M2 5l9 4 9-4M11 9v12" fill="none" stroke="#555" /></g>],
]

function SpinRow({ label, value, className = '' }) {
  return (
    <label className={`flex h-[21px] items-center ${className}`}>
      <span className="w-[82px]">{label}</span>
      <input defaultValue={value} className={`h-4 w-[59px] pl-px text-[#dcdcdc] ${SUNK}`} />
      <span className="ml-px flex h-4"><Spinner /></span>
    </label>
  )
}

function Rollups() {
  return (
    <div className="flex w-44 shrink-0 border-l border-t border-black text-[#c6c6c6]">
      <div className="flex min-w-0 flex-1 flex-col overflow-hidden pl-0.5 pr-1 pt-3">
        <section className="mr-px flex flex-col border border-black px-0.5 pb-[3px]">
          <RollupHeader title="Create" className="mx-px" />
          <div className="mt-[5px] flex justify-center gap-0.5">
            {CREATE_ICONS.map(([name, tint, icon]) => (
              <Btn key={name} aria-label={name} tint={tint} className="h-6 w-[27px]">
                <svg width="22" height="22" viewBox="0 0 22 22">{icon}</svg>
              </Btn>
            ))}
          </div>
          <div className="relative ml-2 mr-2.5 mt-[5px] h-[21px] border-2 border-black border-r-[#333] border-b-[#333] bg-[#f4f4f4]">
            <select aria-label="Particle group" className="h-full w-full appearance-none outline-none"><option></option></select>
            <Arrow className="pointer-events-none absolute right-1 top-1.5 text-[#a8a8a8]" />
          </div>
          <div className="mt-[3px] grid grid-cols-2 gap-x-px gap-y-[3px]">
            {['All', 'Shape Collision', 'Active', 'Volume Breaker', 'Floor', 'Box'].map((b) => <Btn key={b} className="h-[18px]">{b}</Btn>)}
          </div>
        </section>

        <section className="mt-[14px] flex min-h-0 flex-1 flex-col border border-b-0 border-black px-px">
          <RollupHeader title="Volume Breaker" className="mx-0.5 shrink-0" />
          <fieldset className="shrink-0 border border-black pb-1 pl-[3px] pr-1">
            <legend className="ml-1 px-0.5 leading-[14px]">Simulation Cache</legend>
            <SpinRow label="Time Offset" value="0" className="mt-1" />
            <SpinRow label="Position X" value="0.0'" className="mt-[3px]" />
            <SpinRow label="Position Y" value="0.0'" />
            <SpinRow label="Position Z" value="0.0'" />
            <SpinRow label="Rotation X" value="0.0" className="mt-px" />
            <SpinRow label="Rotation Y" value="0.0" />
            <SpinRow label="Rotation Z" value="0.0" />
            <SpinRow label="Scale" value="100.0" className="mt-0.5" />
            <p className="leading-[19px]">Link To Object</p>
            <Btn className="ml-1 h-5 w-[151px]">None</Btn>
            <p className="whitespace-nowrap leading-6">Out Of Range Hold Particle</p>
            <div className="grid grid-cols-4 gap-1">
              {['||', '<<', '<<>>', '>>'].map((b) => <Btn key={b} className="h-[23px]">{b}</Btn>)}
            </div>
          </fieldset>
          <div className="flex shrink-0 flex-col gap-2 pl-1 pt-2">
            <div className="flex items-center"><span className="w-11">Group</span><Dropdown label="Group" options={['None']} className="h-5 w-[113px]" /></div>
            <div className="flex items-center"><span className="w-11">Emitter</span><Dropdown label="Emitter" options={['None']} className="h-5 w-[113px]" /></div>
            <label className="-mt-px flex items-center"><span className="w-11">Name</span><input defaultValue="%n" className={`h-5 w-24 pl-0.5 text-[#dcdcdc] ${SUNK}`} /></label>
          </div>
          <p className="mt-px shrink-0 pl-px leading-5">Rollups</p>
          <ul className="mr-0.5 min-h-0 flex-1 border border-b-0 border-[#7c808c] bg-[#565656] pl-3">
            <li className="mt-px flex items-center">
              <span className="w-3 border-t border-dotted border-[#888]" />
              <svg width="15" height="16" viewBox="0 0 15 16" fill="none">
                <path d="M0 2h4M2 0v4M8 3h7M11.500 0v7M10 14h5M12.500 12v4" stroke="#000" />
                <path d="M0 9.500h11M5.500 4v11" stroke="#000" strokeWidth="3" />
                <path d="M1 9.500h9M5.500 5v9" stroke="#fff" />
              </svg>
              <span className="ml-1.5 text-[#e0e0e0]">None</span>
            </li>
          </ul>
        </section>
      </div>
      <div className="flex w-1 flex-col bg-[#cfcfcf]"><span className="h-[76%] bg-[#0c0c0c]" /></div>
    </div>
  )
}

function ThinkingWindow() {
  return (
    <section className="absolute bottom-[51px] left-[111px] right-[309px] top-[70px] flex rounded-t-lg rounded-b-md border border-[#101828] bg-linear-to-b from-[#6f8bbb] from-0% via-[#aebfdb] via-28% to-[#143c7c] to-28% shadow-[0_0_10px_3px_rgba(0,0,0,0.75)]">
      <div className="flex min-w-0 flex-1 flex-col rounded-t-[7px] rounded-b-[5px] border border-[#c5d8f0]">
        <header className={`flex h-[27px] shrink-0 items-start rounded-t-md bg-linear-to-r from-[#7c97c4] via-[#143c7c] via-45% to-[#7f99c6] px-1.5 text-xs text-black ${SHELL}`}>
          <div className="-ml-1 flex h-[25px] items-center bg-linear-to-r from-transparent via-[#8ea6cd] via-20% to-transparent pl-1 pr-6">
            <svg width="15" height="15" viewBox="0 0 15 15">
              <rect width="15" height="15" rx="2" fill="#26323a" />
              <path d="M12 4C9 1 3 2 2.500 7s5 7 8.500 4 1-7-3-6-3 5 0 4.500 1.500-2 0-2" fill="none" stroke="#f0f0f0" strokeWidth="1.600" />
            </svg>
            <h1 className="ml-1.5 whitespace-pre [text-shadow:0_0_6px_#b9cbe6,0_0_4px_#b9cbe6,0_0_8px_#b9cbe6]">{'Thinking001  Total=0000005  Tree=0000000  Selected=0000000'}</h1>
          </div>
          <div className="ml-auto flex h-[19px] shrink-0 overflow-hidden rounded-b-[4px] border border-t-0 border-[#d0dcee]">
            <button aria-label="Minimize" className="flex w-7 items-center justify-center border-r border-[#d0dcee] bg-linear-to-b from-[#a9badb] from-50% to-[#4d6c9f] to-50%">
              <svg width="12" height="5" viewBox="0 0 12 5"><rect x=".5" y=".5" width="11" height="4" fill="#fff" stroke="#444c5c" /></svg>
            </button>
            <button aria-label="Maximize" className="flex w-[27px] items-center justify-center border-r border-[#d0dcee] bg-linear-to-b from-[#a9badb] from-50% to-[#4d6c9f] to-50%">
              <svg width="12" height="10" viewBox="0 0 12 10"><path d="M.5.500h11v9H.5zM4 3.500h4v3H4z" fill="#fff" fillRule="evenodd" stroke="#444c5c" /></svg>
            </button>
            <button aria-label="Close" className="flex w-[46px] items-center justify-center bg-linear-to-b from-[#d98d82] from-50% to-[#b52b1c] to-50%">
              <svg width="12" height="10" viewBox="0 0 12 10"><path d="M2.500 1.500l7 7M9.500 1.500l-7 7" stroke="#4a2a2a" strokeWidth="4" /><path d="M2.500 1.500l7 7M9.500 1.500l-7 7" stroke="#fff" strokeWidth="2.400" /></svg>
            </button>
          </div>
        </header>
        <div className={`mx-[5px] mb-[5px] flex min-h-0 flex-1 border border-[#a4bce0] bg-[#444] px-1 pb-1 pt-1 text-[11px] ${UI}`}>
          <div className="flex min-w-0 flex-1 gap-[15px] pl-1 pt-[5px]">
            <SystemColumn />
            <Canvas />
          </div>
          <div className="ml-2.5 flex"><Rollups /></div>
        </div>
      </div>
    </section>
  )
}

/* ---------- status bar ---------- */

const BOX = 'border border-t-black border-l-black border-r-[#383838] border-b-[#383838]'

function Coord({ axis, value }) {
  return (
    <label className="ml-[14px] flex h-[22px] items-center text-[#c6c6c6]">
      <span className="w-[11px]">{axis}:</span>
      <input defaultValue={value} className={`h-[22px] w-[57px] pl-px text-[#111] ${SUNK}`} />
    </label>
  )
}

const Play = ({ children, label, className = 'w-[26px]' }) => (
  <button aria-label={label} className={`flex h-[21px] items-center justify-center ${className}`}>
    <svg width="18" height="14" viewBox="0 0 18 14" fill="#999" stroke="#e6e6e6">{children}</svg>
  </button>
)

const NAV = [
  ['Dolly', <g key="1" fill="none"><path d="M10 3v14M1 9h18" stroke="#ccc" /><path d="M10 1L6 5h8zM2 9l3-2v4zM18 9l-3-2v4z" fill="#ccc" /><path d="M10 20l-4-5h8z" fill="#d22" /><path d="M10 11v5" stroke="#d22" strokeWidth="2" /></g>],
  ['Perspective', <g key="2"><path d="M10 1l9 4-9 4-9-4z" fill="#eee" stroke="#223" strokeWidth=".6" /><path d="M2 5l8 4v10L4 12z" fill="#2a36a8" stroke="#dde" strokeWidth=".6" /><path d="M18 5l-8 4v10l6-7z" fill="#b9c0e6" stroke="#223" strokeWidth=".6" /></g>],
  ['Roll', <g key="3" fill="none"><path d="M3 17h4v-3a6.500 6.500 0 1 1 6 0v3h4" stroke="#aaa" strokeWidth="1.400" /><path d="M10 1v6" stroke="#d22" strokeWidth="2" /></g>],
  ['Zoom extents all', <g key="4"><path d="M6 2h6v7H6zM13 2h6v7h-6zM13 10h6v6h-6z" fill="#ddd" stroke="#444" strokeWidth=".6" /><path d="M1 9h10v10H1z" fill="#7bb36a" stroke="#355c2b" /></g>],
  ['Field of view', <path key="5" d="M3 3l14 7-14 7M6 4c3 3 3 9 0 12" fill="none" stroke="#ddd" strokeWidth="1.300" />],
  ['Walk through', <g key="6" fill="#f2f2f2"><ellipse cx="6" cy="8" rx="3" ry="5" /><ellipse cx="14" cy="6" rx="3" ry="5" /><ellipse cx="7" cy="16" rx="2" ry="2.500" /><ellipse cx="14" cy="14" rx="2" ry="2.500" /></g>],
  ['Orbit camera', <g key="7"><path d="M0 0h20v20H0z" fill="#3b7fdd" /><circle cx="10" cy="10" r="5" fill="#f0f0f0" stroke="#333" strokeWidth=".6" /><path d="M5.500 9C0 11 2 13.500 10 13.500S20 11 14.500 9" fill="none" stroke="#c22" strokeWidth="1.500" /></g>],
  ['Maximize viewport', <g key="8" fill="none"><path d="M7.500 6.500h11v11h-11z" stroke="#888" /><path d="M2 2h10v11H2z" fill="#ededed" /><path d="M5 5l6 6M5 9V5h4" stroke="#111" strokeWidth="1.400" /></g>],
]

function StatusBar() {
  return (
    <footer className={`flex h-[47px] shrink-0 overflow-hidden text-[11px] text-[#cfcfcf] ${UI}`}>
      <div className="flex w-[98px] shrink-0 flex-col gap-px pl-0.5 pt-[3px]">
        <div className="h-[22px] border border-[#777] border-b-white bg-[#dcc4c4]" />
        <input aria-label="MAXScript listener" defaultValue="Max to Physcs" className="h-[22px] w-full border border-[#777] bg-white pl-1 font-['Liberation_Mono',monospace] text-[12px] text-black outline-none" />
      </div>
      <span className="ml-1 mr-0.5 w-[3px] border-r-2 border-black" />
      <div className="flex min-w-0 flex-1 flex-col gap-[3px] pt-1">
        <div className="flex h-[22px] items-center">
          <div className={`h-[22px] flex-1 pl-1.5 leading-[21px] ${BOX}`}>1 Object Selected</div>
          <button aria-label="Lock selection" className="ml-2">
            <svg width="11" height="14" viewBox="0 0 11 14"><path d="M2.500 7V4a3 3 0 0 1 6 0v3" fill="none" stroke="#ccc" strokeWidth="1.500" /><path d="M1 7h9v6H1z" fill="#e8d6b4" /><path d="M5.500 8v3" stroke="#333" /></svg>
          </button>
          <button aria-label="Absolute mode" className="ml-[14px]">
            <svg width="15" height="15" viewBox="0 0 15 15"><path d="M0 0h15v15H0z" fill="#dfe2e6" /><circle cx="7.500" cy="7.500" r="3.500" fill="none" stroke="#333" strokeWidth="1.500" /><path d="M7.500 0v4M7.500 11v4M0 7.500h4M11 7.500h4" stroke="#333" /></svg>
          </button>
          <div className="mr-[14px] flex">
            <Coord axis="X" value="-138.623'" />
            <Coord axis="Y" value="92.535'" />
            <Coord axis="Z" value="0.0'" />
          </div>
        </div>
        <div className="flex h-[22px]">
          <div className={`flex-1 whitespace-pre pl-1 leading-[21px] ${BOX}`}>Rendering Time  0:00:35</div>
          <button aria-label="Adaptive degradation" className="ml-px mr-1.5 flex w-5 items-center justify-center border-l border-black">
            <svg width="13" height="13" viewBox="0 0 13 13"><path d="M1 3l2-2h9v9l-2 2H1z" fill="#e9e9e9" stroke="#111" /><path d="M3 1v9h9M1 12l2-2M10 3v9M1 3h9" fill="none" stroke="#777" strokeWidth=".7" /></svg>
          </button>
        </div>
      </div>
      <div className="flex w-[100px] shrink-0 flex-col gap-[3px] pt-1">
        <div className={`h-[22px] pl-1 leading-[21px] ${BOX}`}>Grid = 50.0'</div>
        <button className={`h-[22px] pl-1 text-left leading-[21px] ${BOX}`}>Add Time Tag</button>
      </div>
      <Btn aria-label="Set keys" className="ml-[3px] mt-[3px] w-11 shrink-0">
        <svg width="26" height="12" viewBox="0 0 26 12" fill="none" stroke="#0a0a0a" strokeWidth="2"><circle cx="5" cy="6" r="4" /><path d="M9 6h16M19 6v4M23 6v4" /></svg>
      </Btn>
      <div className="ml-[3px] flex w-12 shrink-0 flex-col gap-0.5 pt-1">
        <Btn className="h-[21px]">Auto Key</Btn>
        <Btn className="h-[21px]">Set Key</Btn>
      </div>
      <div className="ml-[3px] flex w-[116px] shrink-0 flex-col gap-0.5 pt-1">
        <Dropdown label="Key set" options={['Selected']} className="h-[21px]" />
        <div className="flex">
          <button aria-label="Tangents" className="w-[27px]">
            <svg width="24" height="20" viewBox="0 0 24 20" fill="none"><path d="M3 15c3 0 3-3 5-3 3-1 2 6 4 3s1-11 5-11l2 2" stroke="#d5605a" strokeWidth="1.600" /><path d="M2 17h4M14 3h6" stroke="#44508c" /><path d="M23 15v4h-4z" fill="#fff" /></svg>
          </button>
          <Btn className="h-[21px] flex-1">Key Filters...</Btn>
        </div>
      </div>
      <div className="ml-0.5 flex w-32 shrink-0 flex-col gap-0.5 pt-1">
        <div className="flex">
          <Play label="Go to start" className="w-7 border-r border-black"><path d="M1.500 1v12M9 2v10L3 7zM15 2v10L9 7z" /></Play>
          <Play label="Previous frame" className="w-6"><path d="M8 2v10L2 7zM10.500 3v8M13.500 3v8M16.500 3v8" /></Play>
          <Play label="Play" className="w-[22px]"><path d="M4 2v10l8-5z" /></Play>
          <Play label="Next frame" className="w-[25px] border-r border-black"><path d="M10 2v10l6-5zM7.500 3v8M4.500 3v8M1.500 3v8" /></Play>
          <Play label="Go to end" className="w-[29px] border-r border-black"><path d="M16.500 1v12M9 2v10l6-5zM3 2v10l6-5z" /></Play>
        </div>
        <div className="flex">
          <Play label="Key mode" className="w-7 border-r border-black"><path d="M1.500 1v12M16.500 1v12M8 4v6L3 7zM10 4v6l5-3z" /></Play>
          <input aria-label="Current frame" defaultValue="130" className={`h-[21px] min-w-0 flex-1 pl-0.5 text-[#dcdcdc] ${SUNK}`} />
          <span className="flex py-px"><Spinner /></span>
          <button aria-label="Time configuration" className="ml-1 w-[22px] border-l border-black pl-1">
            <svg width="16" height="16" viewBox="0 0 16 16"><path d="M1 0h9v13H1z" fill="#ddd" stroke="#222" strokeWidth=".6" /><path d="M3 2h4v4H3z" fill="#2c5f9e" /><circle cx="11" cy="11" r="4.500" fill="#eef" stroke="#333" /><path d="M11 8.500V11h2" stroke="#333" fill="none" /></svg>
          </button>
        </div>
      </div>
      <div className="grid w-24 shrink-0 grid-cols-4 content-start justify-items-center gap-y-0.5 pt-1">
        {NAV.map(([name, icon]) => (
          <button key={name} aria-label={name} className="flex h-[21px] items-center"><svg width="19" height="19" viewBox="0 0 20 20">{icon}</svg></button>
        ))}
      </div>
    </footer>
  )
}

export default function App() {
  return (
    <div className="relative flex h-screen flex-col overflow-hidden bg-[#444]">
      <MainToolbar />
      <Ribbon />
      <div className="flex min-h-0 flex-1">
        <div className="flex min-w-0 flex-1 flex-col">
          <Viewport />
          <div className="h-5 shrink-0" />
          <TimeSlider />
        </div>
        <CommandPanel />
      </div>
      <StatusBar />
      <ThinkingWindow />
    </div>
  )
}
